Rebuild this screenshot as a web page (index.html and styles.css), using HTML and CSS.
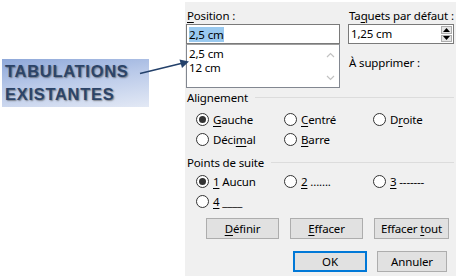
FILE: index.html
```html
<!DOCTYPE html>
<html lang="fr">
<head>
<meta charset="utf-8">
<title>Tabulations</title>
<link rel="stylesheet" href="styles.css">
</head>
<body>
<div class="left">
  <div class="callout">
    <div class="callout-line">TABULATIONS</div>
    <div class="callout-line">EXISTANTES</div>
  </div>
</div>
<svg class="arrow" width="456" height="276" viewBox="0 0 456 276">
  <line x1="140" y1="73.5" x2="181" y2="63.5" stroke="#23406a" stroke-width="1.6"/>
  <polygon points="189,61.5 179.5,59.5 182,68" fill="#23406a"/>
</svg>
<div class="panel">
  <div class="top">
    <div class="col-pos">
      <div class="lbl"><u>P</u>osition :</div>
      <div class="input"><span class="sel">2,5 cm</span></div>
      <div class="listbox">
        <div class="items">
          <div>2,5 cm</div>
          <div>12 cm</div>
        </div>
        <div class="scroll">
          <svg width="9" height="6" viewBox="0 0 9 6"><path d="M1 5 L4.5 1.5 L8 5" fill="none" stroke="#c2c2c2" stroke-width="1.2"/></svg>
          <svg width="9" height="6" viewBox="0 0 9 6"><path d="M1 1 L4.5 4.5 L8 1" fill="none" stroke="#c2c2c2" stroke-width="1.2"/></svg>
        </div>
      </div>
    </div>
    <div class="col-def">
      <div class="lbl">Ta<u>q</u>uets par défaut :</div>
      <div class="input spin-input">
        <span>1,25 cm</span>
        <div class="spinner">
          <div class="spin-btn"><svg width="7" height="4" viewBox="0 0 7 4"><path d="M0 4 L3.5 0 L7 4 Z" fill="#000"/></svg></div>
          <div class="spin-btn"><svg width="7" height="4" viewBox="0 0 7 4"><path d="M0 0 L3.5 4 L7 0 Z" fill="#000"/></svg></div>
        </div>
      </div>
      <div class="lbl remove">À supprimer :</div>
    </div>
  </div>

  <div class="group-head"><span>Alignement</span><div class="rule"></div></div>
  <div class="radios">
    <div class="radio"><span class="ring on"></span><span><u>G</u>auche</span></div>
    <div class="radio"><span class="ring"></span><span><u>C</u>entré</span></div>
    <div class="radio"><span class="ring"></span><span>D<u>r</u>oite</span></div>
    <div class="radio"><span class="ring"></span><span>Déci<u>m</u>al</span></div>
    <div class="radio"><span class="ring"></span><span><u>B</u>arre</span></div>
  </div>

  <div class="group-head second"><span>Points de suite</span><div class="rule"></div></div>
  <div class="radios tight">
    <div class="radio"><span class="ring on"></span><span><u>1</u> Aucun</span></div>
    <div class="radio"><span class="ring"></span><span><u>2</u> .......</span></div>
    <div class="radio"><span class="ring"></span><span><u>3</u> -------</span></div>
    <div class="radio"><span class="ring"></span><span><u>4</u> ____</span></div>
  </div>

  <div class="btn-row">
    <div class="btn w73"><span><u>D</u>éfinir</span></div>
    <div class="btn w73"><span><u>E</u>ffacer</span></div>
    <div class="btn w75"><span>Effacer <u>t</u>out</span></div>
  </div>
  <div class="btn-row end">
    <div class="btn ok"><span>OK</span></div>
    <div class="btn cancel"><span>Annuler</span></div>
  </div>
</div>
</body>
</html>
```
FILE: styles.css
```css
html, body {
  margin: 0;
  padding: 0;
  background: #ffffff;
}
body {
  width: 456px;
  height: 276px;
  overflow: hidden;
  display: flex;
  position: relative;
  font-family: "Noto Sans", "Open Sans", sans-serif;
  font-size: 11.5px;
  letter-spacing: -0.15px;
  color: #000;
}
u {
  text-decoration: underline;
  text-underline-offset: 2px;
  text-decoration-thickness: 1px;
}
.left {
  width: 185px;
  flex: none;
  padding: 59px 0 0 2px;
  box-sizing: border-box;
}
.callout {
  width: 147px;
  height: 48px;
  box-sizing: border-box;
  padding: 1px 0 0 3px;
  background: linear-gradient(172deg, #8ea8d9 0%, #b9c9e9 45%, #e3e9f5 100%);
  font-family: "Liberation Sans", Arial, sans-serif;
  font-weight: bold;
  font-size: 16.5px;
  line-height: 23px;
  letter-spacing: 0.7px;
  color: #2c4468;
  text-shadow: 1px 1px 1.5px rgba(50, 50, 50, 0.55);
}
.arrow {
  position: absolute;
  left: 0;
  top: 0;
  pointer-events: none;
  z-index: 2;
}
.panel {
  flex: 1;
  margin-top: 2px;
  background: #f0f0f0;
  padding: 6px 7px 0 1px;
  display: flex;
  flex-direction: column;
}
.top {
  display: flex;
  gap: 5px;
}
.col-pos {
  width: 154px;
}
.col-def {
  flex: 1;
  padding-left: 3px;
}
.lbl {
  height: 16px;
  line-height: 16px;
  padding-left: 1px;
  white-space: nowrap;
}
.input {
  height: 20px;
  box-sizing: border-box;
  border: 1px solid #7a7a7a;
  background: #fff;
  padding: 0 2px;
  line-height: 18px;
  display: flex;
  align-items: center;
}
.sel {
  background: #99c9ef;
  line-height: 15px;
}
.listbox {
  height: 44px;
  box-sizing: border-box;
  border: 1px solid #828790;
  border-top-color: #a0a0a0;
  background: #fff;
  display: flex;
}
.items {
  flex: 1;
  padding: 2px 0 0 2px;
  line-height: 14px;
}
.scroll {
  width: 17px;
  display: flex;
  flex-direction: column;
  justify-content: space-between;
  align-items: center;
  padding: 7px 0 6px;
}
.spin-input {
  padding-right: 1px;
  justify-content: space-between;
}
.spinner {
  width: 11px;
  height: 16px;
  display: flex;
  flex-direction: column;
  gap: 1px;
}
.spin-btn {
  flex: 1;
  background: #e5e5e5;
  border: 1px solid #adadad;
  display: flex;
  align-items: center;
  justify-content: center;
}
.remove {
  margin-top: 11px;
}
.group-head {
  display: flex;
  align-items: center;
  gap: 7px;
  height: 15px;
  line-height: 15px;
  margin-top: 2px;
  padding-left: 1px;
}
.group-head.second {
  margin-top: 6px;
}
.rule {
  flex: 1;
  height: 1px;
  background: #dcdcdc;
}
.radios {
  display: grid;
  grid-template-columns: 88px 89px 1fr;
  grid-auto-rows: 19.5px;
  padding: 5px 0 0 10px;
}
.radios.tight {
  padding-top: 2px;
}
.radio {
  display: flex;
  align-items: center;
  gap: 4px;
  white-space: nowrap;
}
.ring {
  width: 13px;
  height: 13px;
  box-sizing: border-box;
  border: 1px solid #333;
  border-radius: 50%;
  background: #fff;
  flex: none;
  position: relative;
}
.ring.on::after {
  content: "";
  position: absolute;
  left: 2px;
  top: 2px;
  width: 7px;
  height: 7px;
  border-radius: 50%;
  background: #333;
}
.btn-row {
  display: flex;
  gap: 11px;
  margin-top: 7px;
  padding-left: 20px;
}
.btn-row.end {
  margin-top: 12px;
  padding-left: 107px;
  gap: 10px;
}
.btn {
  height: 21px;
  box-sizing: border-box;
  border: 1px solid #adadad;
  background: #e1e1e1;
  display: flex;
  align-items: center;
  justify-content: center;
  white-space: nowrap;
}
.w73 { width: 73px; }
.w75 { width: 75px; }
.ok {
  width: 74px;
  border: 2px solid #0078d7;
}
.cancel {
  width: 70px;
}
```
